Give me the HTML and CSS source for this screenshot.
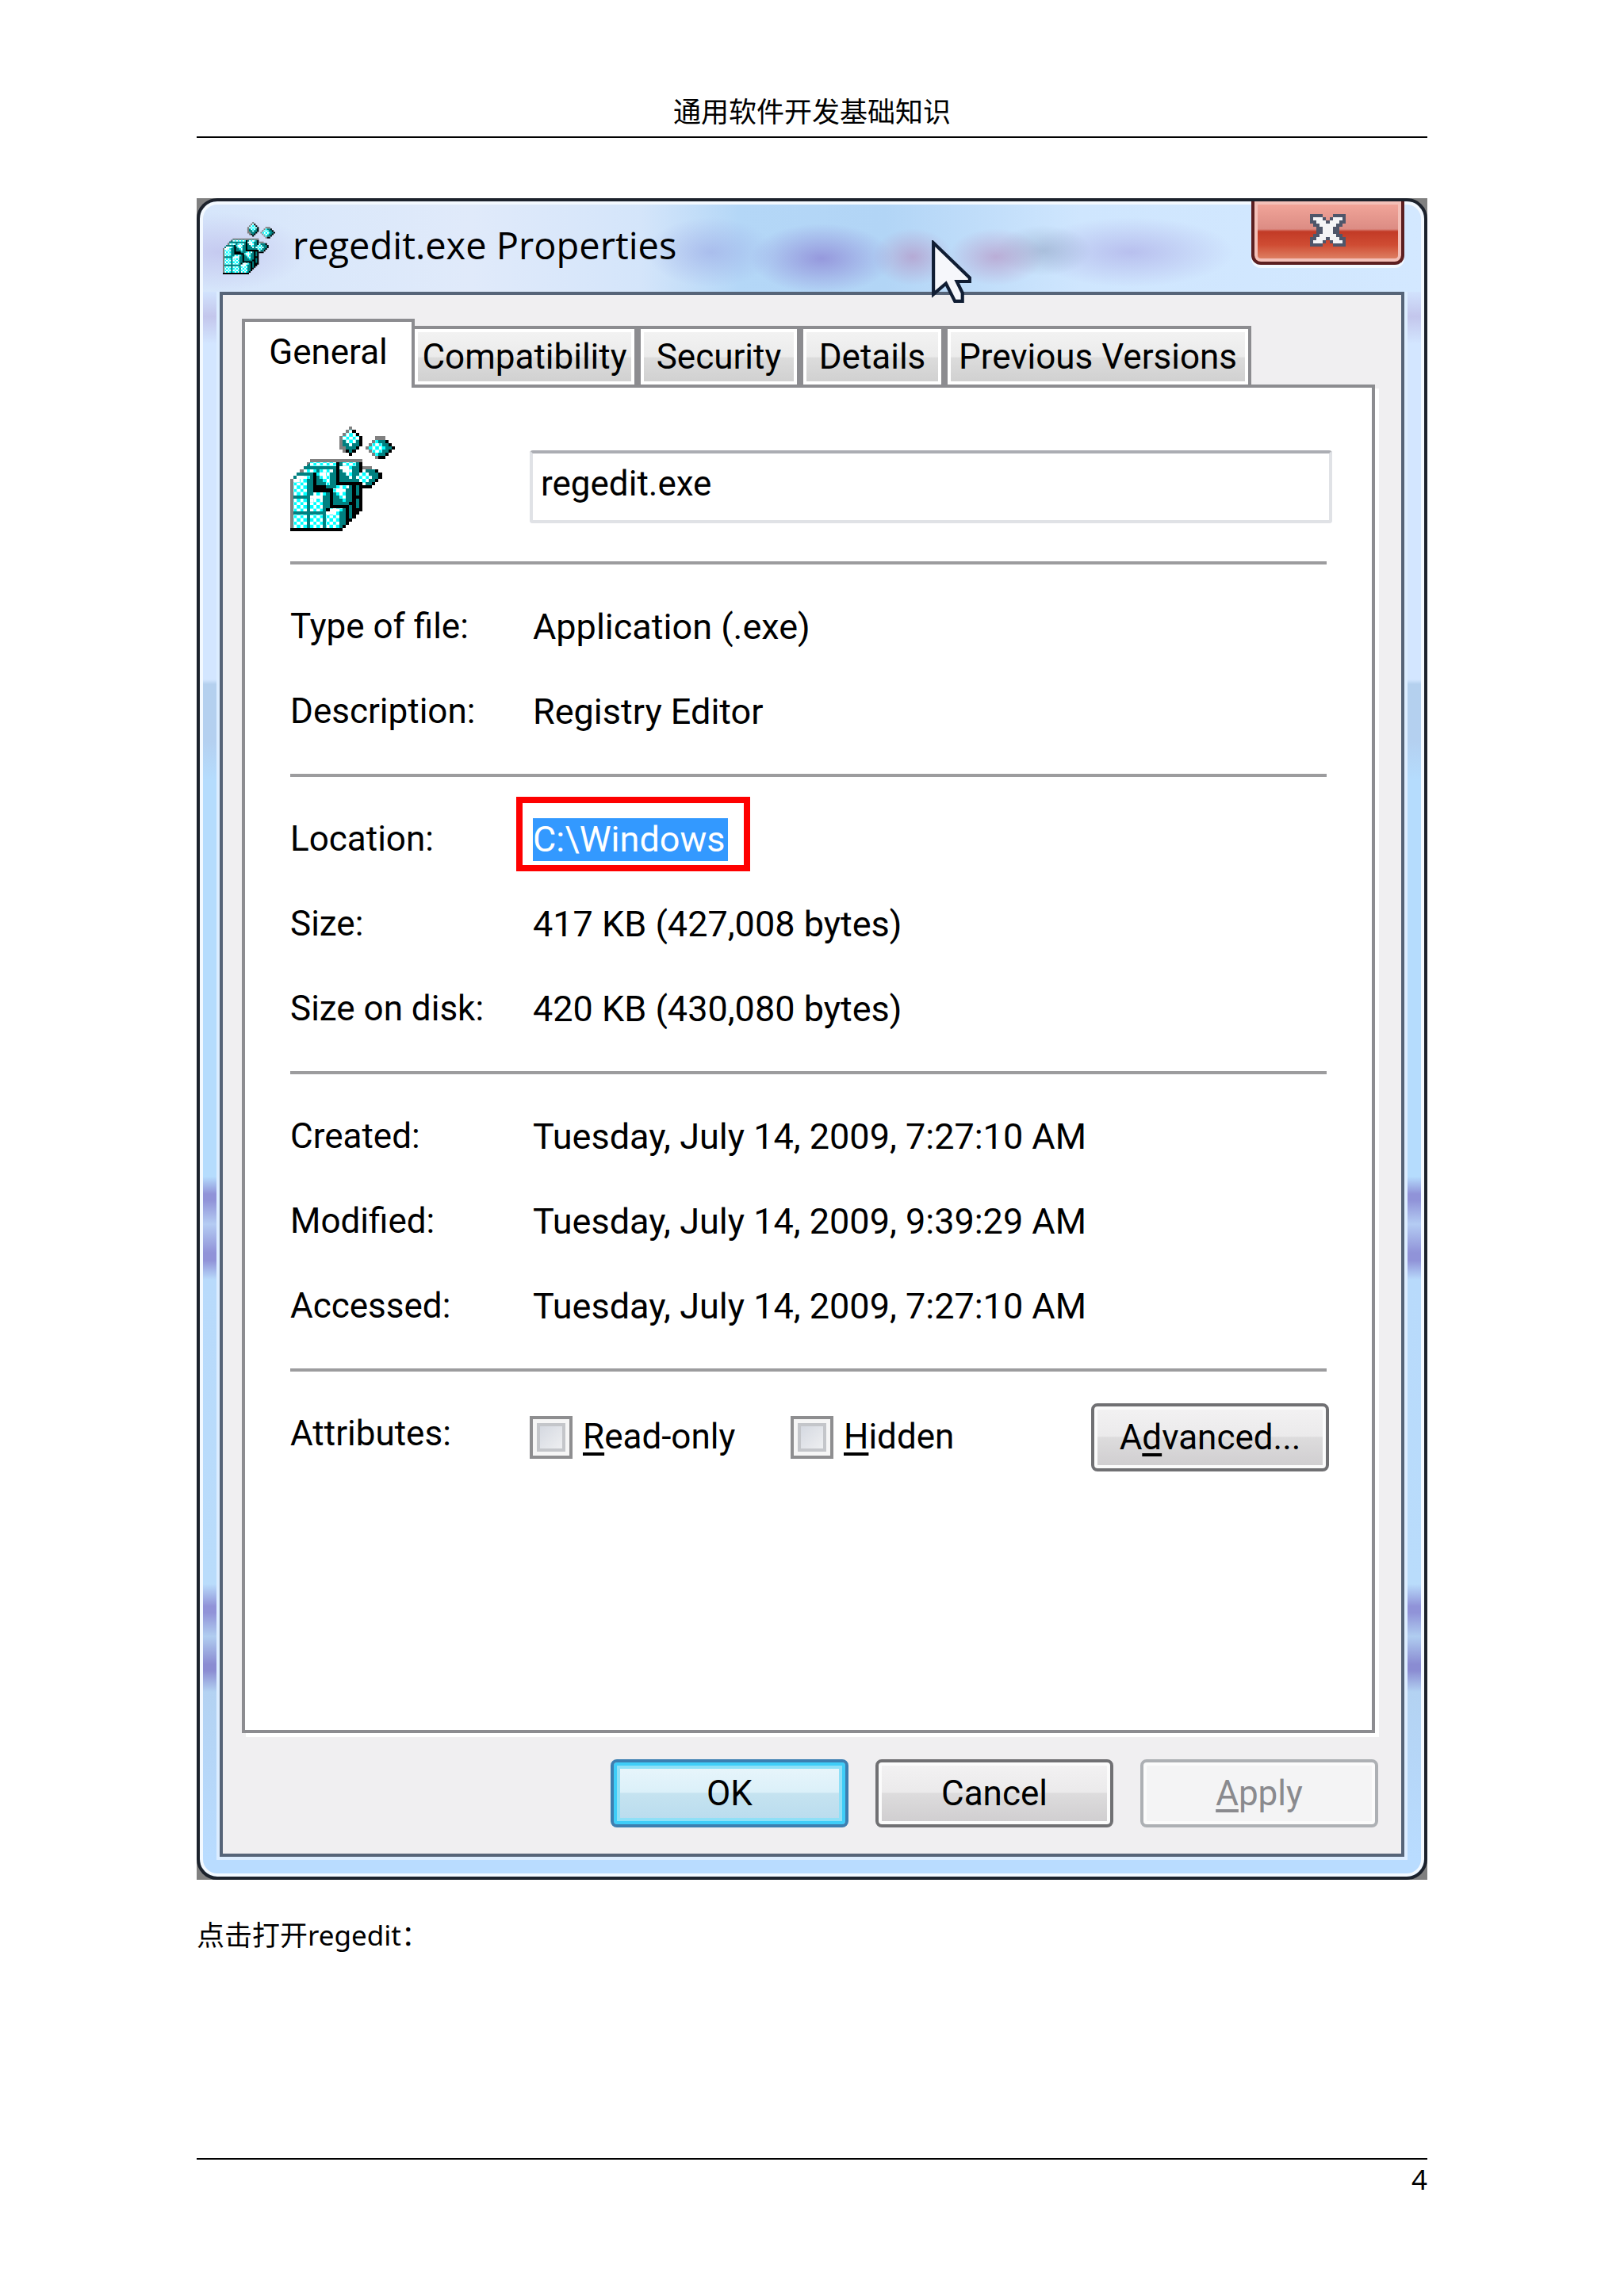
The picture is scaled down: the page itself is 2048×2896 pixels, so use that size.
FILE: index.html
```html
<!DOCTYPE html>
<html lang="zh-CN">
  <head>
    <meta charset="UTF-8" />
    <meta name="viewport" content="width=device-width, initial-scale=1.0" />
    <title>通用软件开发基础知识</title>
    <link rel="stylesheet" href="styles.css">
  </head>
  <body>
    <header class="page-header">通用软件开发基础知识</header>

    <main>
      <div class="figure">
        <div class="window" lang="en">
          <!-- title bar -->
          <div class="titlebar">
            <svg class="title-icon" viewBox="0 0 32 32"><use href="#regedit"></use></svg>
            <span class="title">regedit.exe Properties</span>
            <button class="close" type="button" aria-label="Close">
              <svg viewBox="0 0 11 10" shape-rendering="crispEdges">
                <path fill="#4f566a" d="M0 0H4V1H5V2H6V1H7V0H11V3H10V4H9V6H10V7H11V10H7V9H6V8H5V9H4V10H0V7H1V6H2V4H1V3H0Z"/>
                <path fill="#f4f4f6" d="M1 1H4V2H5V3H6V2H7V1H10V2H9V3H8V4H7V6H8V7H9V8H10V9H7V8H6V7H5V8H4V9H1V8H2V7H3V6H4V4H3V3H2V2H1Z"/>
              </svg>
            </button>
            <svg class="cursor" viewBox="0 0 12 19">
              <path d="M.5 .8V16.4L4.3 13.1L7 18.5H9.3V16L7.6 12.5H11.5V11.4Z"/>
            </svg>
          </div>

          <div class="client">
            <div class="tabs" role="tablist">
              <button class="tab active" type="button" role="tab" aria-selected="true">General</button>
              <button class="tab compatibility" type="button" role="tab">Compatibility</button>
              <button class="tab security" type="button" role="tab">Security</button>
              <button class="tab details" type="button" role="tab">Details</button>
              <button class="tab versions" type="button" role="tab">Previous Versions</button>
            </div>

            <div class="panel" role="tabpanel">
              <div class="file">
                <svg class="file-icon" viewBox="0 0 32 32" shape-rendering="crispEdges">
                  <defs>
                    <pattern id="check" width="2" height="2" patternUnits="userSpaceOnUse">
                      <path fill="#fff" d="M0 0H2V2H0Z"/>
                      <path fill="#0ff" d="M0 0H1V1H0ZM1 1H2V2H1Z"/>
                    </pattern>
                    <g id="regedit">
                      <!-- outline -->
                      <path fill="#000" d="M6 11H22V26H21V27H20V28H19V29H18V30H17V31H16V32H0V16H1V15H2V14H3V13H4V12H5V11Z"/>
                      <path fill="#808080" d="M6 10H22V11H6V12H5V13H4V14H3V15H2V16H1V31H0V16H1V15H2V14H3V13H4V12H5V11H6Z"/>
                      <!-- cube sides -->
                      <path fill="#008080" d="M6 11H14V12H5ZM5 12H14V13H4V12ZM4 13H7V15H2V14H4ZM1 15H7V20H6V21H5V31H1ZM8 12H14V18H13V19H11V18H8ZM15 11H21V17H15ZM13 18H19V23H18V24H13ZM6 20H12V25H11V31H5V21H6ZM12 25H17V30H16V31H11V26H12ZM20 18H21V21H20ZM20 22H21V25H20ZM18 24H19V28H18Z"/>
                      <!-- lit faces -->
                      <path fill="url(#check)" d="M6 11H14V12H6ZM4 13H8V14H4ZM2 15H6V16H5V21H1V16H2ZM1 22H5V26H1ZM1 27H5V31H1ZM7 20H11V21H10V26H6V21H7ZM6 27H10V31H6ZM12 25H16V26H15V31H11V26H12ZM8 14H9V13H13V14H12V18H11V17H10V16H9V15H8ZM15 12H16V11H20V12H19V16H18V15H17V14H16V13H15ZM13 19H14V18H18V19H17V23H16V22H15V21H14V20H13Z"/>
                      <path fill="#fff" d="M2 15H4V16H3V17H1V16H2ZM8 21H10V22H7V23H6V22H7V21ZM13 25H14V27H11V26H13ZM9 14H11V16H10V15H9ZM16 12H18V14H17V13H16ZM14 19H16V21H15V20H14Z"/>
                      <!-- flying pieces -->
                      <path fill="#000" d="M19 1H20V2H21V3H22V6H21V7H20V8H19V9H18V8H17V7H19ZM29 4H30V5H31V6H32V7H31V8H30V9H29V10H27V9H29ZM25 13H27V14H28V16H27V17H26V18H25V19H22V18H25Z"/>
                      <path fill="#008080" d="M15 4H21V6H20V7H19V8H18V7H17V6H16V5H15ZM26 4H29V5H30V6H31V7H30V8H29V9H27V4ZM22 13H26V14H27V16H26V17H25V18H22Z"/>
                      <path fill="#808080" d="M18 0H19V1H18V2H17V3H16V5H15V3H16V2H17V1H18ZM15 5H16V6H17V8H16V7H15ZM26 3H29V4H26V5H25V6H24V7H25V8H26V9H27V10H26V9H25V8H24V7H23V6H24V5H25V4H26ZM22 12H25V13H22Z"/>
                      <path fill="url(#check)" d="M18 1H19V2H20V3H21V4H20V5H19V6H18V5H17V4H16V3H17V2H18ZM26 4H27V5H28V6H29V7H28V8H27V9H26V8H25V7H24V6H25V5H26ZM22 13H23V14H24V15H25V16H24V17H23V18H22V17H21V16H20V15H21V14H22Z"/>
                    </g>
                  </defs>
                  <use href="#regedit"></use>
                </svg>
                <input class="file-name" type="text" value="regedit.exe" aria-label="File name" />
              </div>

              <dl class="info">
                <dt>Type of file:</dt>
                <dd>Application (.exe)</dd>
                <dt>Description:</dt>
                <dd>Registry Editor</dd>
              </dl>

              <dl class="info">
                <dt>Location:</dt>
                <dd><span class="selected">C:\Windows</span></dd>
                <dt>Size:</dt>
                <dd>417 KB (427,008 bytes)</dd>
                <dt>Size on disk:</dt>
                <dd>420 KB (430,080 bytes)</dd>
              </dl>

              <dl class="info">
                <dt>Created:</dt>
                <dd>Tuesday, July 14, 2009, 7:27:10 AM</dd>
                <dt>Modified:</dt>
                <dd>Tuesday, July 14, 2009, 9:39:29 AM</dd>
                <dt>Accessed:</dt>
                <dd>Tuesday, July 14, 2009, 7:27:10 AM</dd>
              </dl>

              <div class="info attributes">
                <span>Attributes:</span>
                <div class="checks">
                  <label class="check"><input type="checkbox" /><span><u>R</u>ead-only</span></label>
                  <label class="check"><input type="checkbox" /><span><u>H</u>idden</span></label>
                  <button class="btn" type="button">A<u>d</u>vanced...</button>
                </div>
              </div>
            </div>

            <div class="buttons">
              <button class="btn default" type="button">OK</button>
              <button class="btn" type="button">Cancel</button>
              <button class="btn" type="button" disabled><u>A</u>pply</button>
            </div>
          </div>
        </div>
      </div>
      <p class="caption">点击打开regedit：</p>
    </main>

    <footer class="page-footer">4</footer>
  </body>
</html>
```
FILE: styles.css
```css
* {
  box-sizing: border-box;
}
body {
  margin: 0;
  padding: 116px 248px 0;
  min-height: 100vh;
  display: flex;
  flex-direction: column;
  background: #fff;
  color: #000;
  font-family: "Noto Sans", "Noto Sans CJK SC", sans-serif;
  font-size: 35px;
  line-height: 50px;
}
button,
input {
  font: inherit;
  color: inherit;
}
u {
  text-decoration-thickness: 4px;
  text-underline-offset: 5px;
  text-decoration-skip-ink: none;
}

/* document page */
.page-header {
  padding-bottom: 6px;
  border-bottom: 2px solid #000;
  text-align: center;
}
.figure {
  margin-top: 76px;
  background: #808080;
}
.caption {
  margin: 45px 0 0;
}
.page-footer {
  margin-top: auto;
  height: 174px;
  border-top: 2px solid #000;
  text-align: right;
}

/* window frame */
.window {
  border: 4px solid #1c222c;
  border-radius: 26px;
  box-shadow: inset 0 0 0 4px #f3f9ff;
  padding: 4px 4px 25px;
  background: linear-gradient(#d8e8fc 0, #d3e6ff 110px, #c3c6ec 145px, #d3e6ff 180px, #d3e6ff 603px,
    #b4d0ee 609px, #b4d0f0 680px, #b5dcfd 730px, #b5dcfd 1230px, #9093d8 1252px, #9093d8 1260px,
    #b4ccf3 1290px, #9093d8 1326px, #9093d8 1336px, #b8dafb 1360px, #b9dcfb 1744px, #9093d8 1772px,
    #9093d8 1780px, #b0cdf0 1810px, #8a8cd2 1845px, #8a8cd2 1853px, #b3d2f2 1880px, #b9dcff 2090px);
  font-family: Roboto, "Liberation Sans", sans-serif;
  font-size: 44px;
}
.titlebar {
  position: relative;
  display: flex;
  align-items: center;
  gap: 22px;
  height: 110px;
  padding: 0 21px 0 25px;
  border-radius: 20px 20px 0 0;
  background:
    radial-gradient(ellipse 90px 44px at 780px 68px, rgba(140, 132, 212, 0.75), transparent),
    radial-gradient(ellipse 80px 44px at 640px 60px, rgba(150, 160, 225, 0.5), transparent),
    radial-gradient(ellipse 50px 36px at 895px 66px, rgba(180, 140, 190, 0.6), transparent),
    radial-gradient(ellipse 60px 36px at 1000px 66px, rgba(180, 140, 190, 0.6), transparent),
    radial-gradient(ellipse 60px 32px at 1060px 58px, rgba(140, 160, 190, 0.5), transparent),
    radial-gradient(ellipse 130px 44px at 1170px 60px, rgba(165, 160, 225, 0.55), transparent),
    radial-gradient(ellipse 110px 50px at 20px 60px, rgba(190, 190, 235, 0.7), transparent),
    linear-gradient(90deg, #d6e6fb, #e0eafa 22%, #d4e5fa 36%, #b4d7f7 44%, #b2d5f6 56%, #cfe6fe 72%, #d3e8ff);
}
.title-icon {
  width: 66px;
  height: 66px;
}
.title {
  flex: 1;
  padding-bottom: 8px;
  font-family: "Open Sans", sans-serif;
  font-size: 47px;
}
.close {
  align-self: flex-start;
  width: 193px;
  height: 80px;
  margin-top: -4px;
  padding: 0;
  border: 4px solid #5c1f20;
  border-top: 0;
  border-radius: 0 0 12px 12px;
  box-shadow: inset 0 0 0 4px #f3c0b8, 0 4px 0 rgba(255, 255, 255, 0.7);
  background: linear-gradient(#f3a79b, #dc8c84 46%, #c23a26 50%, #cf4c33 72%, #e08a6c);
}
.close svg {
  display: block;
  width: 45px;
  height: 41px;
  margin: 0 auto 4px;
}
.cursor {
  position: absolute;
  left: 919px;
  top: 45px;
  width: 50px;
  height: 79px;
  z-index: 1;
  fill: #f6f7fb;
  stroke: #101d33;
}

/* client area */
.client {
  margin: 0 21px;
  padding: 30px 29px 33px 24px;
  border: 4px solid #566478;
  box-shadow: 0 0 0 4px #dcedff;
  background: #f0eff1;
}
.tabs {
  display: flex;
  align-items: flex-end;
}
.tab {
  height: 74px;
  padding: 0;
  border: 4px solid #8c8c90;
  border-width: 4px 4px 0;
  box-shadow: inset 0 0 0 4px #fff;
  background: linear-gradient(#f3f3f3, #ebebeb 50%, #dcdcdc 52%, #cfcfcf);
  white-space: nowrap;
}
.tab + .tab {
  margin-left: -4px;
  border-left-width: 8px;
}
.tab.active {
  width: 218px;
  height: 87px;
  padding-bottom: 8px;
  margin-bottom: -4px;
  background: #fff;
  position: relative;
  z-index: 1;
}
.tab.active + .tab {
  border-left-width: 4px;
}
.compatibility {
  width: 285px;
}
.security {
  width: 209px;
}
.details {
  width: 186px;
}
.versions {
  width: 391px;
}
.panel {
  margin-right: 4px;
  padding: 49px 50px 291px 57px;
  border: 4px solid #8c8c90;
  box-shadow: 5px 5px 0 #fff;
  background: #fff;
}
.file {
  display: flex;
  align-items: flex-end;
  gap: 170px;
  margin-bottom: 38px;
}
.file-icon {
  flex: none;
  width: 132px;
  height: 132px;
}
.file-name {
  flex: 1;
  height: 92px;
  margin-bottom: 10px;
  padding: 0 10px 8px;
  border: 4px solid #e0e2e6;
  border-top-color: #abadb3;
  border-radius: 4px;
  background: #fff;
}

/* rows of the General tab */
.info {
  display: grid;
  grid-template-columns: 302px 1fr;
  margin: 0;
  padding: 25px 0;
  line-height: 107px;
  background: linear-gradient(#9c9c9e, #9c9c9e) no-repeat 0 0 / calc(100% - 7px) 4px;
  border-top: 4px solid transparent;
  background-origin: border-box;
}
.info dd {
  margin: 0;
  padding-left: 4px;
  font-size: 45px;
}
.selected {
  position: relative;
  display: inline-block;
  padding-right: 4px;
  line-height: 54px;
  background: #3399ff;
  color: #fff;
}
.selected::after {
  content: "";
  position: absolute;
  inset: -27px -28px -13px -21px;
  border: 8px solid #fe0000;
}
.checks {
  display: flex;
  align-items: center;
  padding-top: 4px;
}
.check {
  display: flex;
  align-items: center;
  gap: 13px;
  width: 329px;
}
.check input {
  appearance: none;
  width: 54px;
  height: 54px;
  margin: 0;
  border: 4px solid #8e8e90;
  box-shadow: inset 0 0 0 5px #f6f6f6, inset 0 0 0 9px #c4c6ca;
  background: linear-gradient(135deg, #cdd2dc, #f6f6f6);
}

/* push buttons */
.btn {
  width: 300px;
  height: 86px;
  padding: 0;
  border: 4px solid #707073;
  border-radius: 8px;
  box-shadow: inset 0 0 0 4px #fbfbfb;
  background: linear-gradient(#f3f2f3, #ebeaeb 48%, #dddcdd 50%, #cfcdcf);
  line-height: 50px;
}
.checks .btn {
  margin: 0 4px 0 auto;
}
.btn.default {
  border-color: #3c7fb1;
  box-shadow: inset 0 0 0 4px #3fcdf8, inset 0 0 0 8px #8fe0f7;
  background: linear-gradient(#eaf6fb, #dbf0f9 48%, #c5e3f0 50%, #b8dbee);
}
.btn:disabled {
  border-color: #adb0b4;
  background: #f4f4f5;
  color: #8a8a8e;
}
.buttons {
  display: flex;
  justify-content: flex-end;
  gap: 34px;
  margin-top: 33px;
}
```
